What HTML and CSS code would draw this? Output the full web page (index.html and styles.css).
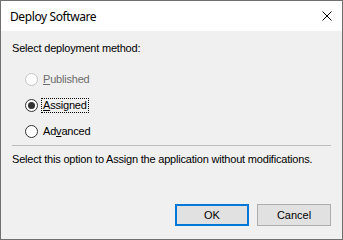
FILE: index.html
```html
<!DOCTYPE html>
<html>
<head>
    <title>Deploy Software</title>
    <link rel="stylesheet" href="styles.css">
</head>
<body>
    <div class="window">
        <div class="titlebar">
            <span class="title">Deploy Software</span>
            <span class="close">
                <svg width="10" height="10" viewBox="0 0 10 10">
                    <path d="M0.5 0.5 L9.5 9.5 M9.5 0.5 L0.5 9.5" stroke="#000" stroke-width="1" fill="none"/>
                </svg>
            </span>
        </div>

        <div class="content">
            <div class="heading">Select deployment method:</div>

            <div class="options">
                <div class="radio disabled">
                    <span class="circle"></span>
                    <span class="label"><u>P</u>ublished</span>
                </div>
                <div class="radio checked">
                    <span class="circle"></span>
                    <span class="label focus"><u>A</u>ssigned</span>
                </div>
                <div class="radio">
                    <span class="circle"></span>
                    <span class="label">Ad<u>v</u>anced</span>
                </div>
            </div>

            <div class="separator"></div>

            <div class="description">Select this option to Assign the application without modifications.</div>

            <div class="buttons">
                <button class="btn default">OK</button>
                <button class="btn">Cancel</button>
            </div>
        </div>
    </div>
</body>
</html>
```

FILE: styles.css
```css
body {
    margin: 0;
    font-family: 'Liberation Sans', Arial, sans-serif;
    font-size: 11px;
    letter-spacing: -0.2px;
    color: #000;
}

.window {
    width: 343px;
    height: 240px;
    box-sizing: border-box;
    border: 1px solid #707070;
    display: flex;
    flex-direction: column;
    background: #f0f0f0;
}

.titlebar {
    height: 30px;
    background: #fff;
    display: flex;
    align-items: center;
    justify-content: space-between;
    padding: 0 10px 0 9px;
}

.title {
    font-family: 'Noto Sans', sans-serif;
    font-size: 12px;
    letter-spacing: -0.4px;
}

.close {
    display: flex;
}

.content {
    flex: 1;
    padding: 0 10px 0 11px;
    display: flex;
    flex-direction: column;
}

.heading {
    margin-top: 11px;
    line-height: 13px;
}

.options {
    margin-top: 18px;
    padding-left: 13px;
    display: flex;
    flex-direction: column;
    gap: 13px;
}

.radio {
    display: flex;
    align-items: center;
    gap: 3px;
    height: 13px;
}

.circle {
    width: 11px;
    height: 11px;
    border: 1px solid #333;
    border-radius: 50%;
    background: #fff;
    display: flex;
    align-items: center;
    justify-content: center;
}

.radio.checked .circle::after {
    content: "";
    width: 7px;
    height: 7px;
    border-radius: 50%;
    background: #333;
}

.radio.disabled .circle {
    border-color: #c4c4c4;
}

.radio.disabled .label {
    color: #6d6d6d;
}

.label {
    line-height: 13px;
    padding: 0 1px;
    border: 1px dotted transparent;
}

.label.focus {
    border-color: #000;
}

.separator {
    margin-top: 7px;
    height: 1px;
    background: #bcbcbc;
    margin-right: 1px;
}

.description {
    margin-top: 7px;
    line-height: 13px;
}

.buttons {
    margin-top: auto;
    margin-bottom: 13px;
    display: flex;
    justify-content: flex-end;
    gap: 8px;
    padding-right: 1px;
}

.btn {
    width: 74px;
    height: 22px;
    box-sizing: border-box;
    border: 1px solid #adadad;
    background: #e1e1e1;
    font-family: 'Liberation Sans', Arial, sans-serif;
    font-size: 11px;
    color: #000;
    padding: 0;
}

.btn.default {
    border: 2px solid #0078d7;
}
```
